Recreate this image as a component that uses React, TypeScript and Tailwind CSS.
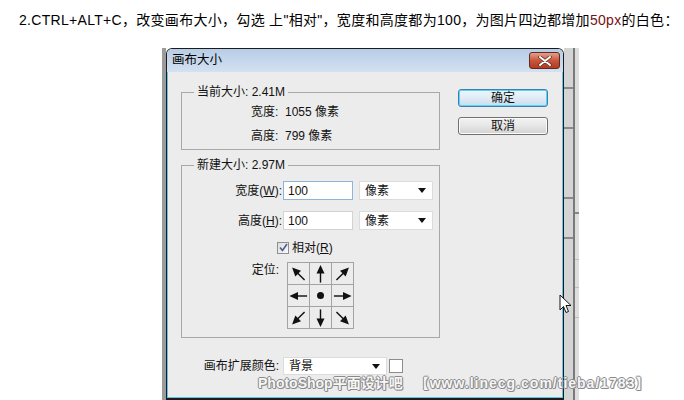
import React from "react";

function Arrow({ angle }: { angle: number }) {
  return (
    <svg width="22" height="22" viewBox="0 0 22 22">
      <g transform={`rotate(${angle} 11 11)`}>
        <line x1="11" y1="20" x2="11" y2="8" stroke="#111" strokeWidth="1.5" />
        <polygon points="11,1.5 6.8,10.5 15.2,10.5" fill="#111" />
      </g>
    </svg>
  );
}

function Cell({ children }: { children?: React.ReactNode }) {
  return (
    <div className="w-[22px] h-[22px] border-r border-b border-[#a3a3a3] flex items-center justify-center">
      {children}
    </div>
  );
}

function Select({ label, w }: { label: string; w: string }) {
  return (
    <div className={`${w} h-full bg-white border border-[#dcdcdc] flex items-center justify-between pl-[5px] pr-[6px]`}>
      <span>{label}</span>
      <svg width="8" height="5" viewBox="0 0 8 5">
        <polygon points="0,0 8,0 4,5" fill="#111" />
      </svg>
    </div>
  );
}

export default function App() {
  return (
    <div className="w-[684px] h-[400px] bg-white relative overflow-hidden font-['Liberation_Sans','Noto_Sans_CJK_SC',sans-serif] text-black">
      <p className="pt-[10px] pl-[19px] text-[14px] leading-[20px] whitespace-nowrap tracking-[0.3px]">
        2.CTRL+ALT+C，改变画布大小，勾选 上"相对"，宽度和高度都为100，为图片四边都增加
        <span className="text-[#7a1010]">50px</span>的白色：
      </p>

      <div className="mt-[18px] ml-[162px] flex h-[352px]">
        {/* left gray bar */}
        <div className="w-[4px] bg-[#9b9b9b]" />
        {/* dialog */}
        <div className="w-[398px] h-full border border-b-2 border-[#1c1c1c] rounded-t-[6px] flex flex-col overflow-hidden">
          <div className="h-[23px] shrink-0 flex items-start justify-between bg-gradient-to-b from-[#b7cde6] to-[#d3e1f1] pl-[5px] pr-[3px] text-[12.5px]">
            <span className="leading-[23px]">画布大小</span>
            <div className="mt-[3px] w-[31px] h-[17px] rounded-[3px] border border-[#5e2a22] bg-gradient-to-b from-[#e2a08d] via-[#c9553b] to-[#b23a1f] flex items-center justify-center">
              <svg width="14" height="10" viewBox="0 0 14 10">
                <path d="M2 1 L12 9 M12 1 L2 9" stroke="#5a2a22" strokeWidth="3.4" strokeLinecap="round" />
                <path d="M2 1 L12 9 M12 1 L2 9" stroke="#ffffff" strokeWidth="2" strokeLinecap="round" />
              </svg>
            </div>
          </div>
          <div className="flex-1 bg-[#ececec] border-x border-b border-[#5cc4ec] flex text-[12px] leading-[16px] text-[#111]">
            <div className="pl-[13px] pt-[20px] flex flex-col">
              {/* group 1 */}
              <div className="relative w-[259px] h-[58px] border border-[#a8a8a8] pl-[69px] pt-[11px] flex flex-col gap-[8px]">
                <span className="absolute -top-[9px] left-[12px] px-[3px] bg-[#ececec]">当前大小: 2.41M</span>
                <span>宽度:&nbsp;&nbsp;1055 像素</span>
                <span>高度:&nbsp;&nbsp;799 像素</span>
              </div>
              {/* group 2 */}
              <div className="relative mt-[15px] w-[259px] h-[173px] border border-[#a8a8a8] pt-[15px] flex flex-col">
                <span className="absolute -top-[9px] left-[12px] px-[3px] bg-[#ececec]">新建大小: 2.97M</span>
                <div className="flex h-[19px] items-center">
                  <span className="w-[100px] text-right">宽度(<span className="underline">W</span>):</span>
                  <div className="ml-[1px] w-[70px] h-full bg-white border border-[#8fb4dc] flex items-center pl-[4px]">100</div>
                  <div className="ml-[6px] h-full"><Select label="像素" w="w-[74px]" /></div>
                </div>
                <div className="flex h-[19px] items-center mt-[11px]">
                  <span className="w-[100px] text-right">高度(<span className="underline">H</span>):</span>
                  <div className="ml-[1px] w-[70px] h-full bg-white border border-[#d2d2d2] flex items-center pl-[4px]">100</div>
                  <div className="ml-[6px] h-full"><Select label="像素" w="w-[74px]" /></div>
                </div>
                <div className="flex items-center mt-[11px] pl-[95px] h-[13px]">
                  <div className="w-[12px] h-[12px] border border-[#8e8f8f] bg-gradient-to-br from-[#dcdcdc] to-[#fafafa] flex items-center justify-center">
                    <svg width="9" height="9" viewBox="0 0 9 9">
                      <path d="M1 4.5 L3.5 7.5 L8 1" stroke="#4a5d94" strokeWidth="1.6" fill="none" />
                    </svg>
                  </div>
                  <span className="ml-[3px]">相对(<span className="underline">R</span>)</span>
                </div>
                <div className="flex items-start mt-[8px]">
                  <span className="w-[97px] text-right">定位:</span>
                  <div className="ml-[8px] grid grid-cols-3 border-l border-t border-[#a3a3a3]">
                    <Cell><Arrow angle={-45} /></Cell>
                    <Cell><Arrow angle={0} /></Cell>
                    <Cell><Arrow angle={45} /></Cell>
                    <Cell><Arrow angle={-90} /></Cell>
                    <Cell><div className="w-[7px] h-[7px] rounded-full bg-[#111]" /></Cell>
                    <Cell><Arrow angle={90} /></Cell>
                    <Cell><Arrow angle={-135} /></Cell>
                    <Cell><Arrow angle={180} /></Cell>
                    <Cell><Arrow angle={135} /></Cell>
                  </div>
                </div>
              </div>
              {/* bottom row */}
              <div className="mt-[19px] flex items-center h-[18px]">
                <span className="w-[98px] text-right">画布扩展颜色:</span>
                <div className="ml-[4px] h-full"><Select label="背景" w="w-[104px]" /></div>
                <div className="ml-[2px] w-[14px] h-[14px] bg-white border border-[#8c8c8c]" />
              </div>
            </div>
            <div className="ml-[18px] pt-[17px] flex flex-col gap-[10px]">
              <div className="w-[90px] h-[18px] rounded-[3px] border border-[#3c7fb1] shadow-[inset_0_0_0_1px_#5fd3f6] bg-gradient-to-b from-[#eef5fa] via-[#e0ecf6] to-[#c9dcea] flex items-center justify-center">
                确定
              </div>
              <div className="w-[90px] h-[18px] rounded-[3px] border border-[#707070] shadow-[inset_0_0_0_1px_#fbfbfb] bg-gradient-to-b from-[#f2f2f2] via-[#e6e6e6] to-[#d2d2d2] flex items-center justify-center">
                取消
              </div>
            </div>
          </div>
        </div>
        {/* right strips */}
        <div className="w-[9px] bg-[#d4d4d4] flex flex-col">
          <div className="h-[39px]" />
          <div className="h-[2px] bg-[#8a8a8a]" />
          <div className="h-[38px]" />
          <div className="h-[2px] bg-[#8a8a8a]" />
          <div className="h-[68px]" />
          <div className="h-[2px] bg-[#8a8a8a]" />
          <div className="h-[38px]" />
          <div className="h-[2px] bg-[#8a8a8a]" />
        </div>
        <div className="w-[2px] bg-[#7a7a7a]" />
        <div className="w-[4px] bg-[#dedede] flex flex-col">
          <div className="h-[164px]" />
          <div className="h-[2px] bg-[#888]" />
          <div className="h-[45px]" />
          <div className="h-[1px] bg-[#bdbdbd]" />
          <div className="h-[27px]" />
          <div className="h-[1px] bg-[#bdbdbd]" />
          <div className="h-[29px]" />
          <div className="h-[1px] bg-[#bdbdbd]" />
        </div>
      </div>

      {/* watermark */}
      <div className="absolute left-[258px] top-[374px] flex gap-[12px] text-[14px] font-bold leading-[18px] text-[#f6f6f6] whitespace-nowrap [text-shadow:1px_0_#8a8a8a,-1px_0_#8a8a8a,0_1px_#8a8a8a,0_-1px_#8a8a8a,1px_1px_#9a9a9a]">
        <span>PhotoShop平面设计吧</span>
        <span className="tracking-[1px]">【www.linecg.com/tieba/1783】</span>
      </div>

      {/* mouse cursor */}
      <svg className="absolute left-[559px] top-[294px]" width="14" height="22" viewBox="0 0 14 22">
        <path d="M1 1 L1 16 L4.5 12.5 L7 18.5 L9.5 17.5 L7 11.5 L12 11.5 Z" fill="#fff" stroke="#111" strokeWidth="1" />
      </svg>
    </div>
  );
}
